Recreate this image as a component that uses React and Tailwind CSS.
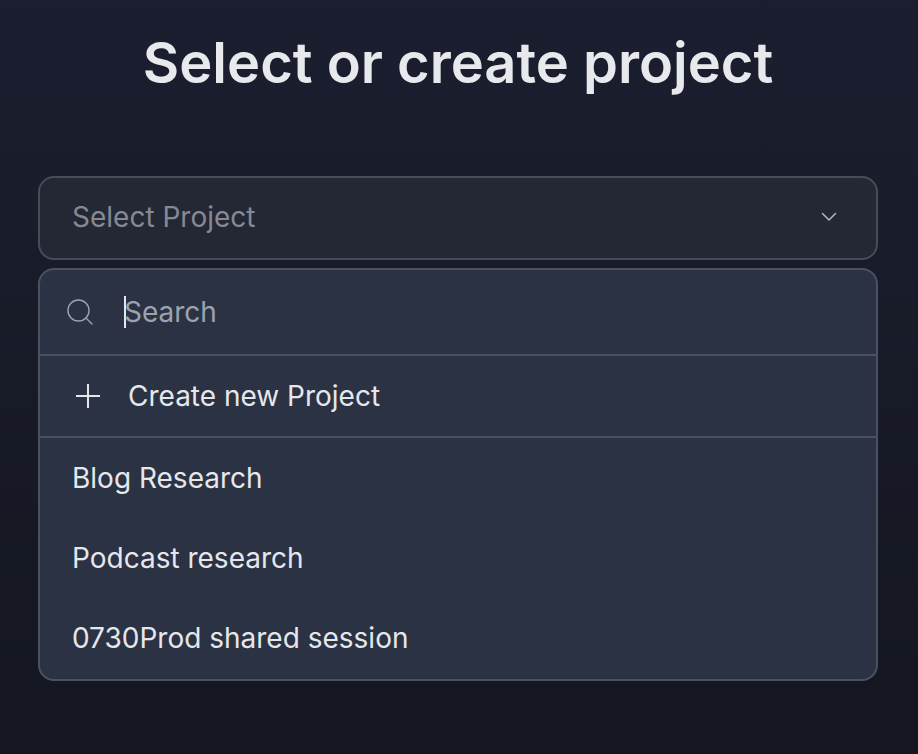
import React from "react";

function Chevron() {
  return (
    <svg width="16" height="10" viewBox="0 0 16 10" fill="none" stroke="#b4b7c0" strokeWidth="1.5" strokeLinecap="round" strokeLinejoin="round">
      <path d="M1.5 1.5 L8 8 L14.5 1.5" />
    </svg>
  );
}

function SearchIcon() {
  return (
    <svg width="28" height="28" viewBox="0 0 28 28" fill="none" stroke="#9ca3af" strokeWidth="1.4" strokeLinecap="round">
      <circle cx="12.5" cy="12.5" r="10.5" />
      <path d="M20 20 L26 26" />
    </svg>
  );
}

function PlusIcon() {
  return (
    <svg width="26" height="26" viewBox="0 0 26 26" fill="none" stroke="#e5e7eb" strokeWidth="2">
      <path d="M13 1 V25 M1 13 H25" />
    </svg>
  );
}

export default function App() {
  return (
    <div className="h-[754px] w-[918px] overflow-hidden bg-gradient-to-b from-[#1b1e2f] to-[#141720] pt-[25px] pr-[40px] pl-[38px] font-['Inter',sans-serif]">
      <h1 className="text-center text-[56px] leading-[76px] font-semibold text-[#e8e9ec]">Select or create project</h1>
      <div className="mt-[75px] flex h-[84px] items-center justify-between rounded-2xl border-2 border-[#484c5a] bg-[#242835] pr-[39px] pb-[2px] pl-[32px]">
        <span className="text-[28px] text-[#868994]">Select Project</span>
        <Chevron />
      </div>
      <div className="mt-[8px] rounded-2xl border-2 border-[#4c5162] bg-[#2b3243]">
        <div className="flex h-[86px] items-center border-b-2 border-[#4c5162] pl-[26px]">
          <SearchIcon />
          <span className="ml-[30px] h-[32px] w-[2px] bg-[#e5e7eb]" />
          <span className="-ml-[2px] text-[28px] text-[#9ca3af]">Search</span>
        </div>
        <div className="flex h-[82px] items-center border-b-2 border-[#4c5162] pl-[35px]">
          <PlusIcon />
          <span className="ml-[27px] text-[28px] text-[#e5e7eb]">Create new Project</span>
        </div>
        <div className="flex h-[80px] items-center pl-[32px] text-[28px] text-[#e5e7eb]">Blog Research</div>
        <div className="flex h-[80px] items-center pl-[32px] text-[28px] text-[#e5e7eb]">Podcast research</div>
        <div className="flex h-[80px] items-center pb-[1px] pl-[32px] text-[28px] text-[#e5e7eb]">0730Prod shared session</div>
        <div className="h-[1px]" />
      </div>
    </div>
  );
}
